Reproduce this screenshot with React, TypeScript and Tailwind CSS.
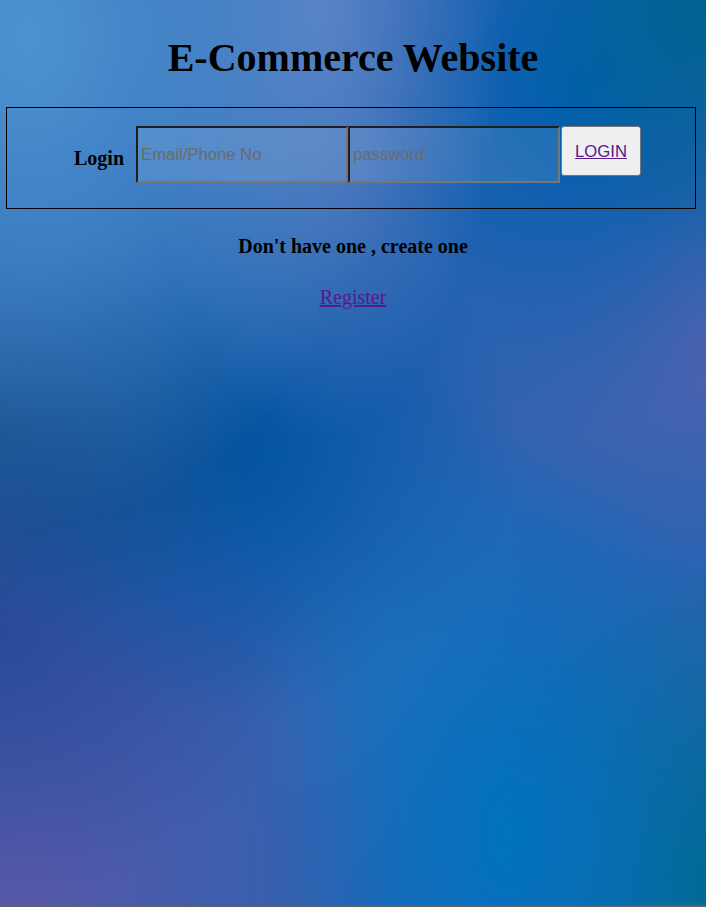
const App = () => {
  return (
    <div className="w-full">
      <div className="min-h-[905px] bg-[#2963b2] [background-image:radial-gradient(ellipse_at_4%_4%,#4d93d0_0%,transparent_40%),radial-gradient(ellipse_at_45%_0%,#5c80c3_0%,transparent_34%),radial-gradient(ellipse_at_100%_0%,#00628f_0%,transparent_20%),radial-gradient(ellipse_at_82%_10%,#005fae_0%,transparent_30%),radial-gradient(ellipse_at_0%_48%,#134a88_0%,transparent_30%),radial-gradient(ellipse_at_35%_50%,#0055a3_0%,transparent_42%),radial-gradient(ellipse_at_0%_70%,#2a4a98_0%,transparent_30%),radial-gradient(ellipse_at_3%_97%,#5858a8_0%,transparent_38%),radial-gradient(ellipse_at_72%_92%,#0072bf_0%,transparent_34%),radial-gradient(ellipse_at_100%_97%,#00688c_0%,transparent_26%),radial-gradient(ellipse_at_100%_36%,#5263b0_0%,transparent_30%),radial-gradient(ellipse_at_55%_70%,#2d70ba_0%,transparent_28%)] font-['Liberation_Serif',serif] text-black">
        <div className="pt-[35px]">
          <h1 className="text-center text-[40px] leading-[46px] font-bold">
            E-Commerce Website
          </h1>
        </div>

        <div className="ml-[6px] mt-[26px] w-[690px] h-[102px] border border-black">
          <div className="flex items-start pt-[18px]">
            <h3 className="ml-[67px] mt-[21px] text-[20px] leading-[23px] font-bold">
              Login
            </h3>
            <input
              type="text"
              placeholder="Email/Phone No"
              className="ml-[12px] w-[212px] h-[57px] border-2 border-t-[#1e1e1e] border-l-[#1e1e1e] border-b-[#767676] border-r-[#767676] bg-white/10 pl-[3px] font-['Liberation_Sans',sans-serif] text-[16.67px] placeholder:text-[#6b6b6b] outline-none"
            />
            <input
              type="password"
              placeholder="password"
              className="w-[212px] h-[57px] border-2 border-t-[#1e1e1e] border-l-[#1e1e1e] border-b-[#767676] border-r-[#767676] bg-white/10 pl-[3px] font-['Liberation_Sans',sans-serif] text-[16.67px] placeholder:text-[#6b6b6b] outline-none"
            />
            <button className="ml-px w-[80px] h-[50px] rounded-[3px] border border-[#767676] bg-[#efefef] font-['Liberation_Sans',sans-serif] text-[16.67px]">
              <a href="#" className="text-[#551a8b] underline">
                LOGIN
              </a>
            </button>
          </div>
        </div>

        <h3 className="mt-[26px] text-center text-[20px] leading-[23px] font-bold">
          Don't have one , create one
        </h3>

        <div className="mt-[28px] text-center text-[20px] leading-[23px]">
          <a href="#" className="text-[#551a8b] underline">
            Register
          </a>
        </div>
      </div>
      <div className="h-[2px] bg-[#5f5f5f]" />
    </div>
  );
};

export default App;
